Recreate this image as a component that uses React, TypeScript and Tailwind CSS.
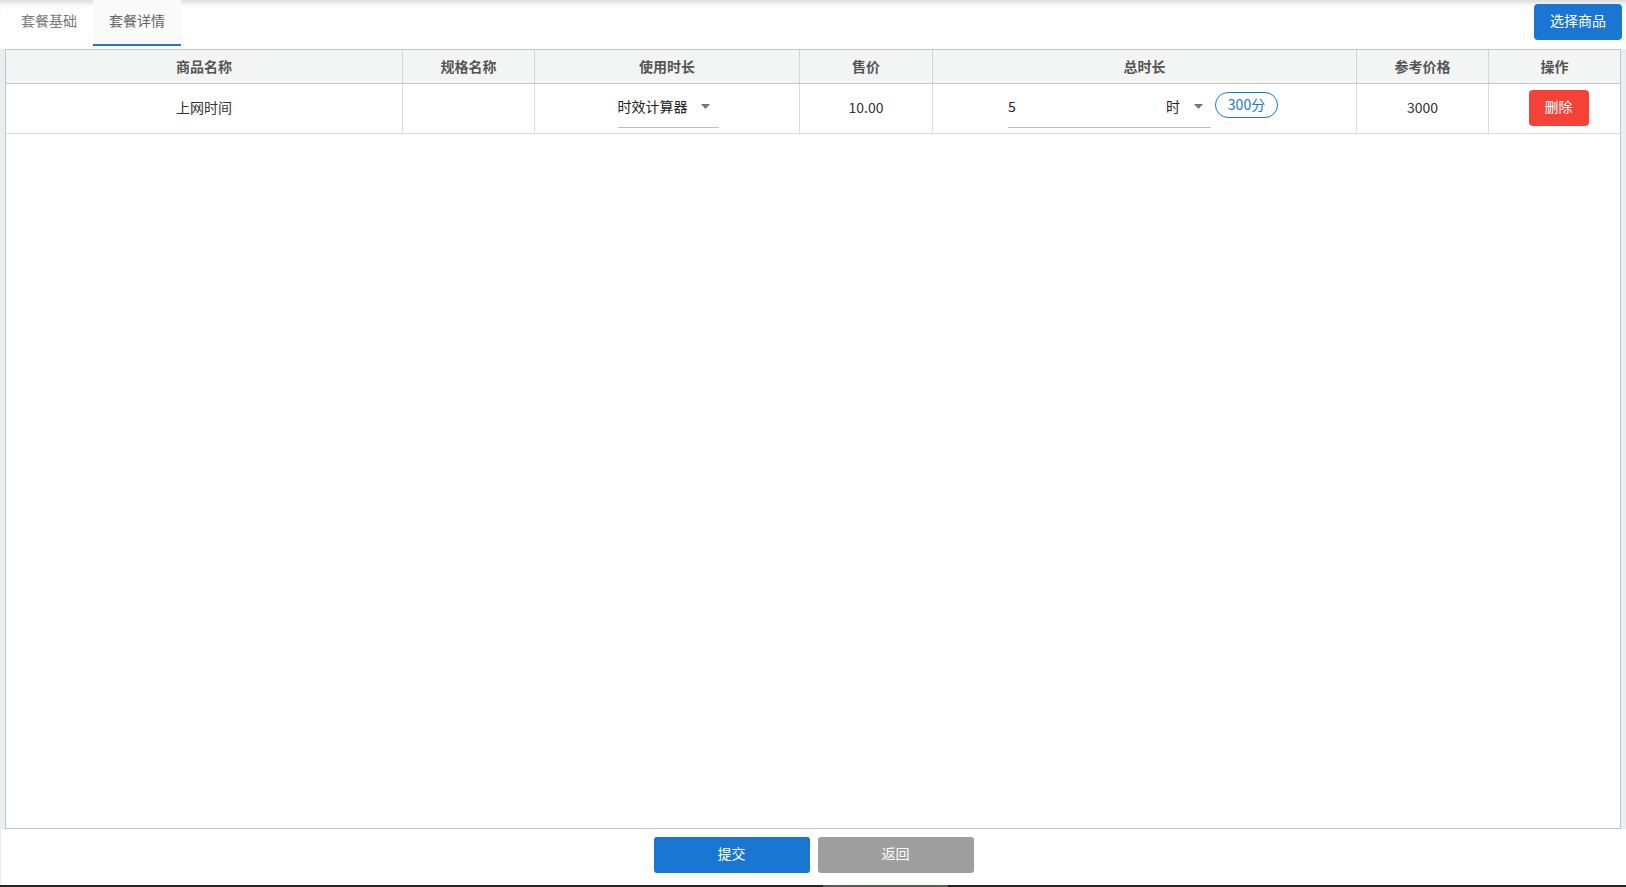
import React from "react";

const font = { fontFamily: '"Noto Sans CJK SC", "Noto Sans", sans-serif' };

function Caret() {
  return (
    <svg width="9" height="5" viewBox="0 0 9 5" className="shrink-0">
      <path d="M0 0 L9 0 L4.5 5 Z" fill="#757575" />
    </svg>
  );
}

export default function App() {
  const headers = ["商品名称", "规格名称", "使用时长", "售价", "总时长", "参考价格", "操作"];
  return (
    <div className="w-[1626px] h-[887px] bg-white flex flex-col overflow-hidden" style={font}>
      {/* top bar */}
      <div className="h-[49px] shrink-0 flex items-start justify-between shadow-[inset_0_6px_6px_-4px_rgba(0,0,0,0.18)]">
        <div className="flex pl-[5px] h-[46px]">
          <div className="w-[88px] h-[46px] flex items-center justify-center text-[14px] text-[#7a7a7a] pb-[6px]">套餐基础</div>
          <div className="w-[88px] h-[46px] flex items-center justify-center text-[14px] text-[#666] bg-[#fafafa] border-b-2 border-[#1976d2] pb-[4px]">套餐详情</div>
        </div>
        <button className="mt-[4px] mr-[4px] w-[88px] h-[36px] rounded-[4px] bg-[#1976d2] text-white text-[14px] pb-[3px]">选择商品</button>
      </div>

      {/* table area */}
      <div className="flex h-[780px] shrink-0">
        <div className="w-[5px] bg-[#e9eef2]" />
        <div className="w-[1616px] border border-[#c4c4c4] bg-white flex flex-col">
          <div className="grid grid-cols-[397px_132px_265px_133px_424px_132px_131px] h-[34px] bg-[#f3f5f4] border-b border-[#c8c8c8]">
            {headers.map((h, i) => (
              <div
                key={h}
                className={`flex items-center justify-center text-[14px] font-bold text-[#555] pb-[1px] ${i < 6 ? "border-r border-[#d4d4d4]" : ""}`}
              >
                {h}
              </div>
            ))}
          </div>
          <div className="grid grid-cols-[397px_132px_265px_133px_424px_132px_131px] h-[50px] border-b border-[#dcdcdc] text-[14px] text-[#333]">
            <div className="flex items-center justify-center border-r border-[#dcdcdc] pb-[3px]">上网时间</div>
            <div className="border-r border-[#dcdcdc]" />
            <div className="flex items-start justify-center border-r border-[#dcdcdc]">
              <div className="w-[101px] h-[41px] mt-[3px] ml-[2px] flex items-center justify-between border-b border-[#bdbdbd] pr-[9px] text-[#222] pb-[2px]">
                <span>时效计算器</span>
                <Caret />
              </div>
            </div>
            <div className="flex items-center justify-center border-r border-[#dcdcdc] pb-[3px]">10.00</div>
            <div className="flex items-start justify-center gap-[4px] border-r border-[#dcdcdc] pr-[3px]">
              <div className="w-[203px] h-[41px] mt-[3px] flex items-center border-b border-[#bdbdbd] text-[#222] pb-[2px]">
                <span className="flex-1">5</span>
                <span className="mr-[14px]">时</span>
                <span className="mr-[8px]"><Caret /></span>
              </div>
              <div className="w-[63px] h-[26px] mt-[8px] rounded-full border border-[#1976d2] text-[#1976d2] flex items-center justify-center text-[14px] pb-[2px]">300分</div>
            </div>
            <div className="flex items-center justify-center border-r border-[#dcdcdc] pb-[3px]">3000</div>
            <div className="flex items-start justify-center pl-[8px]">
              <button className="mt-[6px] w-[60px] h-[36px] rounded-[4px] bg-[#f44336] text-white text-[14px] pb-[3px]">删除</button>
            </div>
          </div>
        </div>
        <div className="w-[5px] bg-[#e9eef2]" />
      </div>

      {/* bottom buttons */}
      <div className="flex-1 flex justify-center items-start gap-[8px] pt-[8px] border-l border-[#ececec]">
        <button className="w-[156px] h-[36px] rounded-[3px] bg-[#1976d2] text-white text-[14px] pb-[3px]">提交</button>
        <button className="w-[156px] h-[36px] rounded-[3px] bg-[#9e9e9e] text-white text-[14px] pb-[3px]">返回</button>
      </div>
      <div className="h-[2px] shrink-0 bg-[#1c2a1e] flex">
        <div className="ml-[823px] w-[125px] bg-[#565c56]" />
      </div>
    </div>
  );
}
